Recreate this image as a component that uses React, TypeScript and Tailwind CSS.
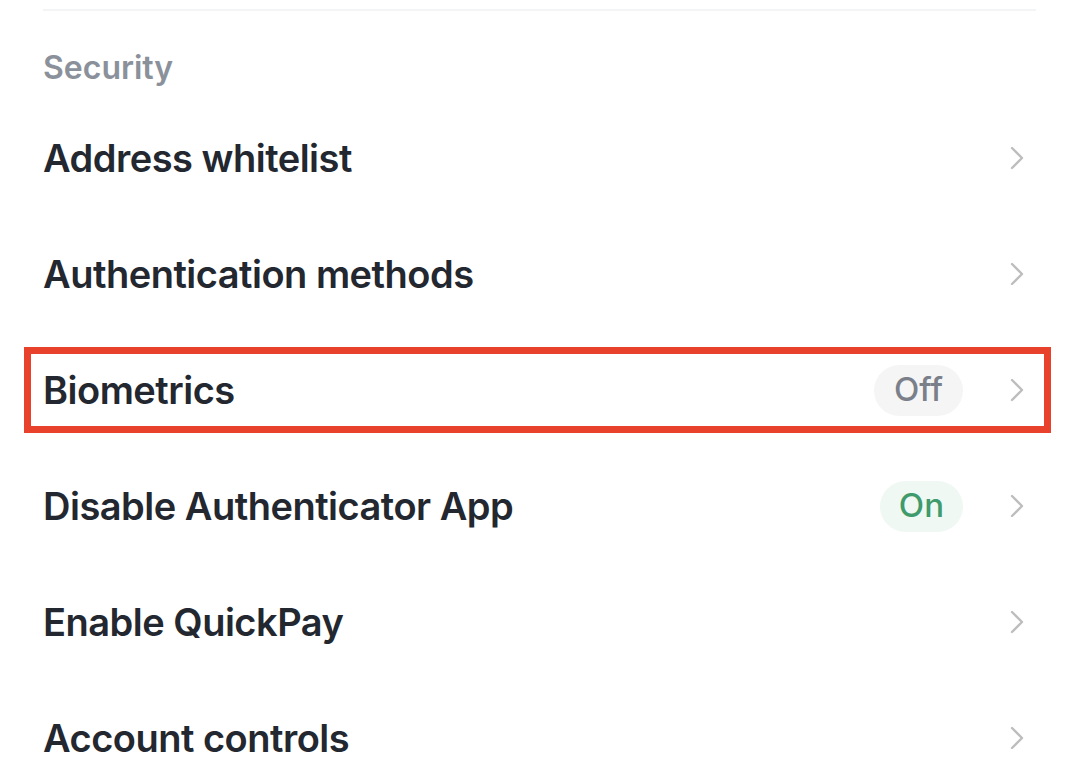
import { ReactNode } from "react";

type Row = {
  label: string;
  badge?: "on" | "off";
  highlighted?: boolean;
};

const rows: Row[] = [
  { label: "Address whitelist" },
  { label: "Authentication methods" },
  { label: "Biometrics", badge: "off", highlighted: true },
  { label: "Disable Authenticator App", badge: "on" },
  { label: "Enable QuickPay" },
  { label: "Account controls" },
];

function Chevron() {
  return (
    <svg width="16" height="24" viewBox="0 0 16 24" fill="none" className="shrink-0">
      <path d="M3 2 L13 12 L3 22" stroke="#bdbdbd" strokeWidth="2.4" strokeLinecap="round" strokeLinejoin="round" />
    </svg>
  );
}

function Badge({ kind }: { kind: "on" | "off" }) {
  if (kind === "on") {
    return (
      <span className="flex h-[51px] items-center rounded-full bg-[#f0f8f3] px-[19px] text-[33px] font-medium text-[#3f9a6c]">
        On
      </span>
    );
  }
  return (
    <span className="flex h-[51px] items-center rounded-full bg-[#f5f5f6] px-[20px] text-[33px] font-medium text-[#7a7f8a]">
      Off
    </span>
  );
}

function SettingsRow({ row }: { row: Row }) {
  let trailing: ReactNode = null;
  if (row.badge) trailing = <Badge kind={row.badge} />;

  return (
    <div className="relative flex h-[116px] items-center justify-between">
      <span className="text-[38px] font-semibold tracking-[-0.5px] text-[#23272f]">{row.label}</span>
      <div className="flex items-center gap-[46px] pr-[11px]">
        {trailing}
        <Chevron />
      </div>
      {row.highlighted ? (
        <div className="pointer-events-none absolute inset-y-[15px] left-[-19px] right-[-15px] border-[7px] border-[#e8412c]" />
      ) : null}
    </div>
  );
}

export default function App() {
  return (
    <div className="min-h-screen overflow-hidden bg-white pl-[43px] pr-[43px] font-['Inter','Noto_Sans',sans-serif]">
      <div className="mt-[9px] h-[2px] bg-[#f3f4f6]" />
      <div className="h-[89px] pt-[37px]">
        <p className="text-[32px] font-semibold leading-[40px] text-[#8b919b]">Security</p>
      </div>
      {rows.map((row) => (
        <SettingsRow key={row.label} row={row} />
      ))}
    </div>
  );
}
